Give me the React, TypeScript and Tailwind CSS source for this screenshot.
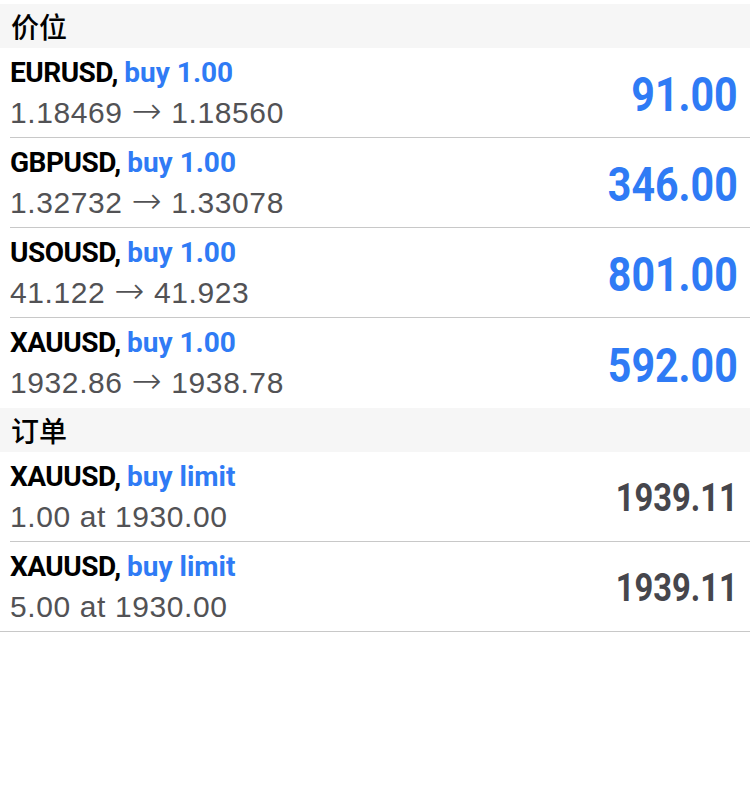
import React from 'react';

interface Position {
  symbol: string;
  side: string;
  from: string;
  to?: string;
  value: string;
}

const positions: Position[] = [
  { symbol: 'EURUSD', side: 'buy 1.00', from: '1.18469', to: '1.18560', value: '91.00' },
  { symbol: 'GBPUSD', side: 'buy 1.00', from: '1.32732', to: '1.33078', value: '346.00' },
  { symbol: 'USOUSD', side: 'buy 1.00', from: '41.122', to: '41.923', value: '801.00' },
  { symbol: 'XAUUSD', side: 'buy 1.00', from: '1932.86', to: '1938.78', value: '592.00' },
];

const orders: Position[] = [
  { symbol: 'XAUUSD', side: 'buy limit', from: '1.00 at 1930.00', value: '1939.11' },
  { symbol: 'XAUUSD', side: 'buy limit', from: '5.00 at 1930.00', value: '1939.11' },
];

function SectionHeader({ title }: { title: string }) {
  return (
    <div className="h-[44px] bg-[#f6f6f6] flex items-center pl-[11px] text-[28px] font-medium text-black font-['Noto_Sans_CJK_SC',sans-serif]">
      {title}
    </div>
  );
}

function Row({ item, border, big }: { item: Position; border: 'inset' | 'full' | 'none'; big: boolean }) {
  return (
    <div className={border === 'full' ? 'border-b border-[#c8c8c8]' : ''}>
      <div className="pl-[10px]">
        <div
          className={`flex items-center justify-between pr-[12px] ${
            border === 'inset' ? 'h-[90px] border-b border-[#c8c8c8]' : border === 'full' ? 'h-[89px]' : 'h-[90px]'
          }`}
        >
          <div>
            <div className="font-['Roboto',sans-serif] font-bold text-[28px] leading-[40px] text-black tracking-[-0.5px]">
              {item.symbol}, <span className="text-[#2f7bf5] tracking-normal">{item.side}</span>
            </div>
            <div className="font-['Liberation_Sans',Arial,sans-serif] text-[30px] leading-[40px] text-[#525255] tracking-[0.6px]">
              {item.from}
              {item.to && (
                <>
                  {' '}
                  <span className="font-['DejaVu_Sans',sans-serif] text-[36px] leading-none font-light">→</span>{' '}
                  {item.to}
                </>
              )}
            </div>
          </div>
          {big ? (
            <div className="inline-block origin-right scale-x-[0.84] font-['Roboto',sans-serif] font-bold text-[49px] leading-none text-[#2f7bf5] mt-[4px]">
              {item.value}
            </div>
          ) : (
            <div className="inline-block origin-right scale-x-[0.86] font-['Roboto',sans-serif] font-bold text-[38px] leading-none text-[#46464c] mt-[2px]">
              {item.value}
            </div>
          )}
        </div>
      </div>
    </div>
  );
}

export default function App() {
  return (
    <div className="w-[750px] h-[811px] bg-white pt-[4px] overflow-hidden">
      <SectionHeader title="价位" />
      {positions.map((p, i) => (
        <Row key={p.symbol} item={p} big border={i === positions.length - 1 ? 'none' : 'inset'} />
      ))}
      <SectionHeader title="订单" />
      {orders.map((o, i) => (
        <Row key={i} item={o} big={false} border={i === orders.length - 1 ? 'full' : 'inset'} />
      ))}
    </div>
  );
}
